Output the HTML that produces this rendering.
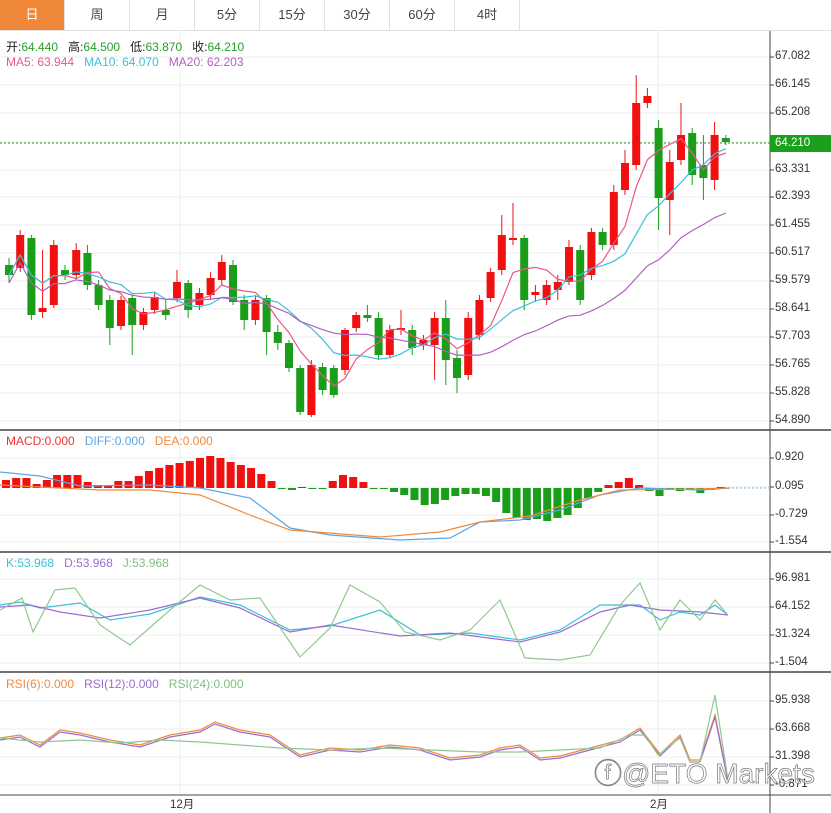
<!DOCTYPE html>
<html><head><meta charset="utf-8"><style>
body{margin:0;width:831px;height:813px;overflow:hidden;background:#fff;font-family:"Liberation Sans","Noto Sans CJK SC",sans-serif;position:relative}
.tabs{position:absolute;left:0;top:0;width:831px;height:30px;border-bottom:1px solid #e2e2e2;display:flex}
.tab{width:64px;height:30px;border-right:1px solid #e2e2e2;text-align:center;line-height:30px;font-size:13px;color:#444}
.tab.on{background:#f0883a;color:#fff}
.t{position:absolute;font-size:12px;white-space:nowrap}
.ax{position:absolute;left:775px;font-size:11.5px;color:#333}
svg{position:absolute;left:0;top:0}
</style></head><body>
<div class="tabs"><div class="tab on">日</div><div class="tab">周</div><div class="tab">月</div><div class="tab">5分</div><div class="tab">15分</div><div class="tab">30分</div><div class="tab">60分</div><div class="tab">4时</div></div>
<svg id="s" width="831" height="813"></svg>
<div class="t" style="left:6px;top:38px;color:#222">开:<span style="color:#2a9d2a">64.440</span>&nbsp;&nbsp; 高:<span style="color:#2a9d2a">64.500</span>&nbsp;&nbsp; 低:<span style="color:#2a9d2a">63.870</span>&nbsp;&nbsp; 收:<span style="color:#2a9d2a">64.210</span></div>
<div class="t" style="left:6px;top:55px"><span style="color:#e8588a">MA5: 63.944</span>&nbsp;&nbsp; <span style="color:#3cbfd9">MA10: 64.070</span>&nbsp;&nbsp; <span style="color:#b25fc0">MA20: 62.203</span></div>
<div class="t" style="left:6px;top:434px"><span style="color:#e33">MACD:0.000</span>&nbsp;&nbsp; <span style="color:#5aa6e8">DIFF:0.000</span>&nbsp;&nbsp; <span style="color:#f08a3c">DEA:0.000</span></div>
<div class="t" style="left:6px;top:556px"><span style="color:#3cbfd9">K:53.968</span>&nbsp;&nbsp; <span style="color:#9a6ccf">D:53.968</span>&nbsp;&nbsp; <span style="color:#7fbf7f">J:53.968</span></div>
<div class="t" style="left:6px;top:677px"><span style="color:#f08a3c">RSI(6):0.000</span>&nbsp;&nbsp; <span style="color:#9a6ccf">RSI(12):0.000</span>&nbsp;&nbsp; <span style="color:#7fbf7f">RSI(24):0.000</span></div>
<div class="ax" style="top:50px">67.082</div><div class="ax" style="top:78px">66.145</div><div class="ax" style="top:106px">65.208</div>
<div style="position:absolute;left:770px;top:135px;width:61px;height:17px;background:#1aa01a;color:#fff;font-size:11.5px;line-height:17px;padding-left:5px;box-sizing:border-box">64.210</div>
<div class="ax" style="top:163px">63.331</div><div class="ax" style="top:190px">62.393</div><div class="ax" style="top:218px">61.455</div><div class="ax" style="top:246px">60.517</div><div class="ax" style="top:274px">59.579</div><div class="ax" style="top:302px">58.641</div><div class="ax" style="top:330px">57.703</div><div class="ax" style="top:358px">56.765</div><div class="ax" style="top:386px">55.828</div><div class="ax" style="top:414px">54.890</div>
<div class="ax" style="top:451px">0.920</div><div class="ax" style="top:480px">0.095</div><div class="ax" style="top:508px">-0.729</div><div class="ax" style="top:535px">-1.554</div>
<div class="ax" style="top:572px">96.981</div><div class="ax" style="top:600px">64.152</div><div class="ax" style="top:628px">31.324</div><div class="ax" style="top:656px">-1.504</div>
<div class="ax" style="top:694px">95.938</div><div class="ax" style="top:722px">63.668</div><div class="ax" style="top:750px">31.398</div><div class="ax" style="top:778px">-0.871</div>
<div class="t" style="left:170px;top:796px;font-size:11.5px;color:#333">12月</div>
<div class="t" style="left:650px;top:796px;font-size:11.5px;color:#333">2月</div>
<div class="t" style="left:594px;top:752px;font-size:28px;color:rgba(255,255,255,0.6);-webkit-text-stroke:0.7px #777">ⓕ@ETO Markets</div>
<script>
var s=document.getElementById('s'),h='';
function L(x1,y1,x2,y2,c,w,d){h+='<line x1="'+x1+'" y1="'+y1+'" x2="'+x2+'" y2="'+y2+'" stroke="'+c+'" stroke-width="'+(w||1)+'"'+(d?' stroke-dasharray="'+d+'"':'')+'/>';}
function R(x,y,w,hh,c){if(hh<0){y+=hh;hh=-hh}h+='<rect x="'+x+'" y="'+y+'" width="'+w+'" height="'+Math.max(hh,1)+'" fill="'+c+'"/>';}
function P(pts,c){h+='<polyline fill="none" stroke="'+c+'" stroke-width="1.2" points="'+pts.map(function(p){return p[0]+','+p[1]}).join(' ')+'"/>';}
[57,85,113,142,170,197,225,253,281,309,337,365,393,421,458,487,515,542,579,607,635,663,701,729,757,785].forEach(function(y){L(0,y,770,y,'#ececec')});
L(180,31,180,795,'#ececec');L(658,31,658,795,'#ececec');
[430,552,672].forEach(function(y){L(0,y,831,y,'#444',1.5)});L(0,795,831,795,'#444');
L(770,31,770,813,'#444');
for(var y of [57,85,113,142,170,197,225,253,281,309,337,365,393,421,458,487,515,542,579,607,635,663,701,729,757,785])L(770,y,774,y,'#444');
L(0,143,770,143,'#1aa01a',1,'2,2');L(720,488,770,488,'#7ab8e8',1,'2,2');
var c=[[265,275,258,283],[268,235,230,272],[238,315,235,320],[312,308,250,318],[305,245,240,308],[270,275,265,280],[275,250,243,278],[253,285,245,290],[285,305,280,310],[300,328,295,345],[326,300,296,330],[298,325,295,355],[325,312,308,330],[310,297,292,314],[310,315,300,320],[298,282,270,302],[283,310,280,318],[305,293,288,310],[295,278,272,300],[280,262,255,285],[265,302,260,305],[300,320,295,330],[320,300,295,325],[298,332,295,355],[332,343,325,350],[343,368,340,372],[368,412,365,415],[415,365,360,417],[367,390,363,395],[368,395,365,398],[370,330,328,375],[328,315,312,332],[315,318,305,322],[318,355,312,360],[355,330,325,358],[330,328,310,335],[330,348,325,355],[345,340,335,350],[345,318,312,380],[318,360,300,385],[358,378,350,393],[375,318,312,380],[335,300,295,340],[298,272,268,302],[270,235,215,275],[240,238,203,245],[238,300,235,310],[295,292,285,302],[300,285,280,305],[290,282,275,300],[282,247,240,285],[250,300,245,305],[275,232,228,280],[232,245,228,250],[245,192,185,250],[190,163,150,195],[165,103,75,170],[103,96,88,108],[128,198,120,230],[200,162,150,235],[160,135,103,165],[133,175,128,185],[165,178,135,200],[180,135,122,190],[138,142,135,145]];
var xs=c.map(function(_,i){return 9+i*11.2});
c.forEach(function(k,i){var x=xs[i],col=k[1]<k[0]?'#f01010':'#1a9e1a';L(x,k[2],x,k[3],col);R(x-4,Math.min(k[0],k[1]),8,Math.abs(k[0]-k[1]),col);});
function ma(n,col){var pts=[];for(var i=0;i<c.length;i++){var a=0,m=0;for(var j=Math.max(0,i-n+1);j<=i;j++){a+=c[j][1];m++}pts.push([xs[i],a/m+(n==20?8:0)])}P(pts,col)}
ma(5,'#e8588a');ma(10,'#3cbfd9');ma(20,'#b25fc0');
var mb=[8,10,10,4,8,13,13,13,6,3,3,7,7,12,17,20,23,25,27,30,32,30,26,23,20,14,7,0,-2,1,-1,0,7,13,11,6,0,-1,-4,-7,-12,-17,-16,-12,-8,-6,-6,-8,-14,-25,-30,-32,-31,-33,-30,-27,-20,-10,-4,3,6,10,3,-3,-8,-2,-3,-2,-5,-2,1];
var n=mb.length;mb.forEach(function(v,i){var x=2+i*(725/n);R(x,488,8,-v,v>0?'#f01010':'#1a9e1a')});
P([[0,472],[40,476],[80,486],[150,485],[200,488],[250,498],[290,528],[330,535],[400,540],[450,538],[480,522],[520,520],[560,510],[600,495],[640,488],[700,490],[730,488]],'#5aa6e8');
P([[0,485],[60,488],[100,490],[150,490],[200,495],[250,515],[290,530],[380,537],[440,532],[480,522],[530,516],[580,500],[620,490],[700,489],[730,488]],'#f08a3c');
P([[0,605],[20,602],[40,608],[80,603],[110,620],[150,614],[200,597],[240,605],[290,630],[330,626],[380,610],[420,635],[470,633],[520,640],[560,630],[600,605],[640,605],[660,620],[680,612],[700,615],[715,605],[728,615]],'#3cbfd9');
P([[0,607],[30,605],[60,612],[100,618],[150,610],[200,598],[240,608],[290,632],[330,625],[400,636],[450,633],[520,642],[560,632],[600,612],[630,605],[660,610],[700,612],[728,615]],'#9a6ccf');
P([[0,610],[22,598],[33,632],[55,590],[75,588],[100,625],[130,645],[170,610],[200,585],[230,600],[260,598],[300,657],[330,628],[350,585],[380,602],[405,632],[440,640],[470,630],[500,600],[525,658],[560,660],[590,655],[620,605],[640,583],[660,630],[680,600],[700,620],[715,600],[728,615]],'#8fc88f');
var r6=[[0,738],[20,735],[40,745],[60,730],[80,733],[110,740],[140,745],[170,735],[200,730],[215,722],[240,730],[270,735],[300,755],[330,748],[360,750],[390,745],[420,748],[450,758],[480,755],[500,748],[520,745],[540,758],[560,756],[590,748],[620,740],[640,728],[660,754],[680,735],[690,760],[700,760],[715,715],[728,780]];
P(r6,'#f08a3c');P(r6.map(function(p){return[p[0],p[1]+2]}),'#9a6ccf');
P([[0,738],[40,742],[80,740],[120,743],[160,740],[200,742],[240,745],[280,748],[330,750],[380,748],[430,750],[480,752],[520,752],[560,750],[600,748],[630,735],[645,735],[658,755],[680,738],[690,762],[700,762],[715,695],[728,780]],'#8fc88f');
s.innerHTML=h;
</script>
</body></html>
